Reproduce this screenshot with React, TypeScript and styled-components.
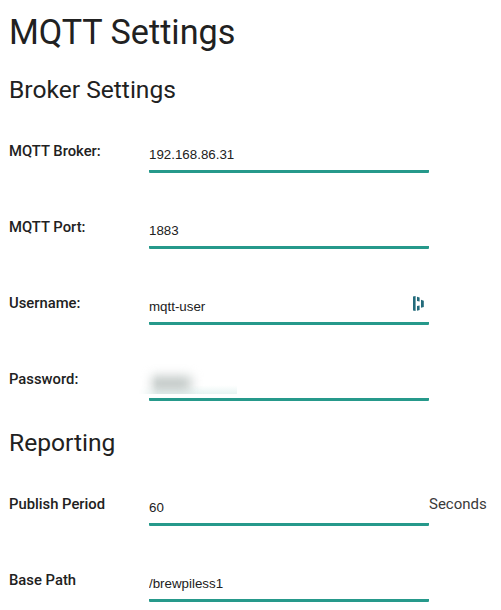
import React from "react";
import styled, { createGlobalStyle } from "styled-components";

const GlobalStyle = createGlobalStyle`
  *, *::before, *::after { box-sizing: border-box; }
  html, body { margin: 0; background: #fff; }
  body { overflow: hidden; }
`;

const Page = styled.main`
  height: 610px;
  overflow: hidden;
  padding-left: 9px;
  font-family: Roboto, sans-serif;
  color: #212121;
`;

const Title = styled.h1`
  margin: 0;
  padding-top: 12px;
  height: 70px;
  font-size: 34.2px;
  font-weight: 400;
  line-height: 40px;
`;

const SectionTitle = styled.h2`
  margin: 0;
  height: 60px;
  padding-top: 5px;
  font-size: 24.6px;
  font-weight: 400;
  line-height: 30px;
`;

const Row = styled.div<{ $last?: boolean }>`
  display: flex;
  height: ${(p) => (p.$last ? 65 : 76)}px;
`;

const Label = styled.label`
  flex: 0 0 140px;
  padding-top: 11px;
  font-size: 14.8px;
  font-weight: 500;
  line-height: 20px;
`;

const Field = styled.div`
  display: flex;
  align-items: center;
  width: 280px;
  height: 43px;
  padding-top: 8px;
  padding-right: 5px;
  border-bottom: 3px solid #26998b;
  border-radius: 0 0 1px 1px;
`;

const Input = styled.input`
  flex: 1;
  min-width: 0;
  height: 17px;
  padding: 1px 0 0;
  border: 0;
  outline: 0;
  background: transparent;
  color: #212121;
  font: 13.33px "Liberation Sans", Arial, sans-serif;
`;

const Unit = styled.span`
  padding-top: 11px;
  color: #3a3a3a;
  font-size: 15px;
  line-height: 20px;
`;

const Masked = styled.span`
  align-self: flex-end;
  flex: none;
  width: 98px;
  height: 30px;
  margin: 0 0 4px -10px;
  overflow: hidden;
  background: linear-gradient(to bottom, rgba(38, 153, 139, 0) 70%, rgba(38, 153, 139, 0.1));
  mask-image: linear-gradient(to right, transparent, #000 18px);

  &::before {
    content: "";
    display: block;
    width: 42px;
    height: 13px;
    margin: 13px 0 0 10px;
    background: #b9c1bf;
    filter: blur(6px);
  }
`;

const VaultSvg = styled.svg`
  flex: none;
  margin-bottom: 6px;
`;

type RowProps = {
  label: string;
  value?: string;
  unit?: string;
  last?: boolean;
  children?: React.ReactNode;
};

function FormRow({ label, value, unit, last, children }: RowProps) {
  return (
    <Row $last={last}>
      <Label>{label}</Label>
      <Field>
        {value !== undefined && <Input defaultValue={value} aria-label={label} />}
        {children}
      </Field>
      {unit && <Unit>{unit}</Unit>}
    </Row>
  );
}

function VaultIcon() {
  return (
    <VaultSvg width="11" height="15" viewBox="0 0 11 15" fill="#236b7b">
      <path d="M0 0.5L2.6 0V15L0 14.5zM4 0.7L6.6 1.5V5.6L4 5zM4 10L6.6 9.4V14L4 14.8zM8 3.8L10.8 4.8V11L8 11.8z" />
    </VaultSvg>
  );
}

export default function App() {
  return (
    <>
      <GlobalStyle />
      <Page>
        <Title>MQTT Settings</Title>
        <SectionTitle>Broker Settings</SectionTitle>
        <FormRow label="MQTT Broker:" value="192.168.86.31" />
        <FormRow label="MQTT Port:" value="1883" />
        <FormRow label="Username:" value="mqtt-user">
          <VaultIcon />
        </FormRow>
        <FormRow label="Password:" last>
          <Masked />
        </FormRow>
        <SectionTitle>Reporting</SectionTitle>
        <FormRow label="Publish Period" value="60" unit="Seconds" />
        <FormRow label="Base Path" value="/brewpiless1" />
      </Page>
    </>
  );
}
